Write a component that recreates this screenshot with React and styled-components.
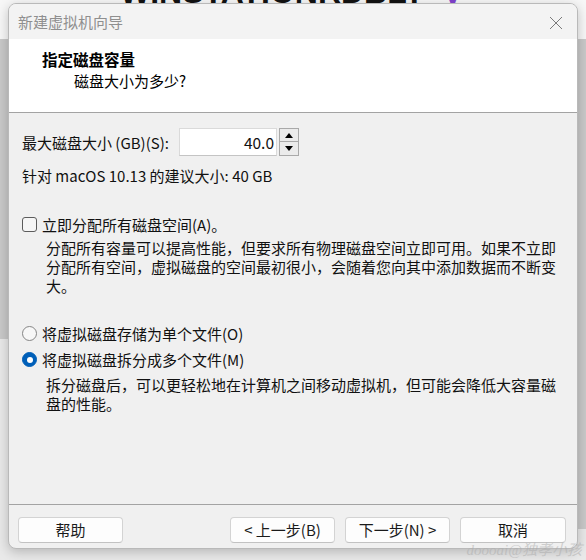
import React from "react";
import styled, { createGlobalStyle } from "styled-components";

const GlobalStyle = createGlobalStyle`
  html, body { margin: 0; padding: 0; }
  body {
    width: 586px;
    height: 560px;
    overflow: hidden;
    font-family: "Noto Sans CJK SC", "Noto Sans", sans-serif;
    color: #111;
  }
`;

const Page = styled.div`
  position: relative;
  width: 586px;
  height: 560px;
  box-sizing: border-box;
  padding: 0 8px;
  background:
    linear-gradient(#f7f7f7, #f7f7f7) top left / 100% 39px no-repeat,
    linear-gradient(#c9c9c9, #c9c9c9) left 39px / 8px 300px no-repeat,
    linear-gradient(#c9c9c9, #c9c9c9) right 39px / 8px 490px no-repeat,
    #e9e9e9;
`;

const BackStrip = styled.div`
  height: 3px;
  overflow: hidden;
  padding-left: 112px;
  white-space: nowrap;
`;

const BackText = styled.div`
  font-family: "Liberation Sans", sans-serif;
  font-weight: 700;
  font-size: 32px;
  line-height: 34px;
  margin-top: -25px;
  color: #111;
  span { color: #7b3fc4; margin-left: 18px; }
`;

const Dialog = styled.div`
  width: 570px;
  height: 546px;
  box-sizing: border-box;
  background: #f0f0f0;
  border: 1px solid #b9b9b9;
  border-radius: 8px;
  box-shadow: 0 3px 12px rgba(0, 0, 0, 0.22);
  display: flex;
  flex-direction: column;
  overflow: hidden;
`;

const TitleBar = styled.div`
  height: 35px;
  flex: none;
  background: #f3f3f3;
  display: flex;
  align-items: center;
  justify-content: space-between;
  padding: 0 14px 0 9px;
`;

const TitleText = styled.div`
  font-size: 15px;
  line-height: 20px;
  color: #8f8f8f;
  margin-top: 1px;
`;

const CloseIcon = styled.svg`
  width: 14px;
  height: 14px;
  margin-top: 2px;
`;

const Header = styled.div`
  height: 74px;
  flex: none;
  box-sizing: border-box;
  background: #ffffff;
  border-bottom: 1px solid #a3a3a3;
  padding: 10px 0 0 33px;
`;

const HeaderTitle = styled.div`
  font-size: 15.5px;
  font-weight: 700;
  line-height: 20px;
  color: #000;
`;

const HeaderSub = styled.div`
  font-size: 15px;
  line-height: 20px;
  margin: 2px 0 0 32px;
  color: #000;
`;

const Body = styled.div`
  flex: 1;
  padding: 15px 0 0 13px;
  font-size: 15px;
  line-height: 19px;
`;

const InputRow = styled.div`
  display: flex;
  align-items: center;
  height: 28px;
`;

const Label = styled.span`
  width: 157px;
  flex: none;
  white-space: nowrap;
`;

const SpinField = styled.div`
  width: 98px;
  height: 28px;
  box-sizing: border-box;
  background: #fff;
  border: 1px solid #dadada;
  border-bottom-color: #c4c4c4;
  text-align: right;
  padding-right: 2px;
  font-size: 15.5px;
  line-height: 26px;
`;

const SpinButtons = styled.div`
  display: flex;
  flex-direction: column;
  margin-left: 2px;
  height: 28px;
`;

const SpinButton = styled.div`
  width: 20px;
  height: 14px;
  box-sizing: border-box;
  border: 1px solid #a9a9a9;
  background: #ebebeb;
  display: flex;
  align-items: center;
  justify-content: center;
  & + & { border-top: none; }
`;

const Arrow = styled.div`
  width: 0;
  height: 0;
  border-left: 4px solid transparent;
  border-right: 4px solid transparent;
  ${(p) => (p.$up ? "border-bottom: 5px solid #000;" : "border-top: 5px solid #000;")}
`;

const TextLine = styled.div`
  margin-top: ${(p) => p.$mt || 0}px;
  white-space: nowrap;
`;

const OptionRow = styled.label`
  display: flex;
  align-items: center;
  height: 19px;
  margin-top: ${(p) => p.$mt || 0}px;
  white-space: nowrap;
`;

const CheckBox = styled.span`
  width: 15px;
  height: 15px;
  box-sizing: border-box;
  border: 1px solid #5c5c5c;
  border-radius: 3px;
  background: #f6f6f6;
  margin-right: 5px;
  flex: none;
`;

const Radio = styled.span`
  width: 15px;
  height: 15px;
  box-sizing: border-box;
  border-radius: 50%;
  flex: none;
  margin-right: 5px;
  display: flex;
  align-items: center;
  justify-content: center;
  background: ${(p) => (p.$checked ? "#005fb8" : "#f7f7f7")};
  border: 1px solid ${(p) => (p.$checked ? "#005fb8" : "#858585")};
  &::after {
    content: "";
    display: ${(p) => (p.$checked ? "block" : "none")};
    width: 6px;
    height: 6px;
    border-radius: 50%;
    background: #fff;
  }
`;

const Description = styled.div`
  margin: ${(p) => p.$mt || 0}px 0 0 24px;
  width: 512px;
`;

const Footer = styled.div`
  height: 44px;
  flex: none;
  box-sizing: border-box;
  border-top: 1px solid #a3a3a3;
  padding: 12px 11px 0 9px;
  display: flex;
  justify-content: space-between;
  align-items: flex-start;
`;

const ButtonGroup = styled.div`
  display: flex;
  gap: 10px;
`;

const Button = styled.button`
  width: ${(p) => p.$w || 105}px;
  height: 26px;
  box-sizing: border-box;
  background: #fdfdfd;
  border: 1px solid #d3d3d3;
  border-bottom-color: #c2c2c2;
  border-radius: 4px;
  font-family: "Noto Sans CJK SC", "Noto Sans", sans-serif;
  font-size: 15px;
  line-height: 22px;
  color: #1a1a1a;
  padding: 0;
`;

const Watermark = styled.div`
  position: absolute;
  right: 4px;
  bottom: 1px;
  font-size: 15px;
  line-height: 18px;
  color: rgba(170, 170, 170, 0.5);
  font-family: "Liberation Serif", "Noto Sans CJK SC", serif;
  font-style: italic;
`;

export default function App() {
  return (
    <>
      <GlobalStyle />
      <Page>
        <BackStrip>
          <BackText>
            WINSTATIONRDBLT<span>V</span>
          </BackText>
        </BackStrip>
        <Dialog>
          <TitleBar>
            <TitleText>新建虚拟机向导</TitleText>
            <CloseIcon viewBox="0 0 14 14">
              <path d="M1 1 L13 13 M13 1 L1 13" stroke="#7a7a7a" strokeWidth="1" fill="none" />
            </CloseIcon>
          </TitleBar>
          <Header>
            <HeaderTitle>指定磁盘容量</HeaderTitle>
            <HeaderSub>磁盘大小为多少?</HeaderSub>
          </Header>
          <Body>
            <InputRow>
              <Label>最大磁盘大小 (GB)(S):</Label>
              <SpinField>40.0</SpinField>
              <SpinButtons>
                <SpinButton>
                  <Arrow $up />
                </SpinButton>
                <SpinButton>
                  <Arrow />
                </SpinButton>
              </SpinButtons>
            </InputRow>
            <TextLine $mt={10}>针对 macOS 10.13 的建议大小: 40 GB</TextLine>
            <OptionRow $mt={30}>
              <CheckBox />
              立即分配所有磁盘空间(A)。
            </OptionRow>
            <Description $mt={4}>
              分配所有容量可以提高性能，但要求所有物理磁盘空间立即可用。如果不立即分配所有空间，虚拟磁盘的空间最初很小，会随着您向其中添加数据而不断变大。
            </Description>
            <OptionRow $mt={29}>
              <Radio />
              将虚拟磁盘存储为单个文件(O)
            </OptionRow>
            <OptionRow $mt={7}>
              <Radio $checked />
              将虚拟磁盘拆分成多个文件(M)
            </OptionRow>
            <Description $mt={6}>
              拆分磁盘后，可以更轻松地在计算机之间移动虚拟机，但可能会降低大容量磁盘的性能。
            </Description>
          </Body>
          <Footer>
            <Button>帮助</Button>
            <ButtonGroup>
              <Button>&lt; 上一步(B)</Button>
              <Button>下一步(N) &gt;</Button>
              <Button $w={106}>取消</Button>
            </ButtonGroup>
          </Footer>
        </Dialog>
        <Watermark>doooai@独孝小孩</Watermark>
      </Page>
    </>
  );
}
